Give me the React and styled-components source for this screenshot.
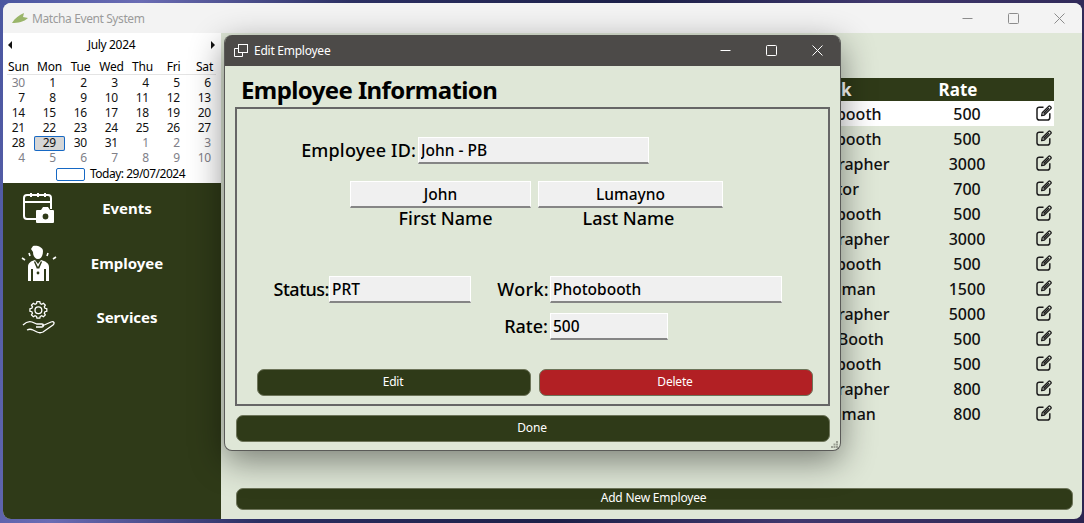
import React from 'react';
import styled, { createGlobalStyle } from 'styled-components';

const FONT = '"Noto Sans", "Open Sans", sans-serif';
const DARK = '#2f3a18';
const PALE = '#dfe7d7';

const GlobalStyle = createGlobalStyle`
  html, body { margin: 0; padding: 0; overflow: hidden; }
  body { font-family: ${FONT}; }
  * { box-sizing: border-box; }
`;

const Desktop = styled.div`
  position: relative;
  width: 1084px;
  height: 523px;
  overflow: hidden;
  padding: 3px 2px 4px 3px;
  background: linear-gradient(100deg, #4a56a0 0%, #6a6cb4 12%, #2b2f62 30%, #1c2048 55%, #40386e 75%, #2a2450 100%);
`;

const MainWindow = styled.div`
  height: 100%;
  display: flex;
  flex-direction: column;
  border-radius: 8px;
  overflow: hidden;
  background: ${PALE};
`;

const TitleBar = styled.div`
  height: ${(p) => (p.$dark ? 31 : 30)}px;
  flex: none;
  display: flex;
  align-items: center;
  padding-left: 8px;
  background: ${(p) => (p.$dark ? '#4c4a48' : '#f3f3f3')};
  color: ${(p) => (p.$dark ? '#ffffff' : '#9b9b9b')};
  font-size: 12px;
  letter-spacing: ${(p) => (p.$dark ? -0.25 : -0.4)}px;
`;

const TitleText = styled.span`
  margin-left: ${(p) => p.$gap}px;
  flex: 1;
`;

const CaptionButton = styled.span`
  width: 46px;
  display: flex;
  justify-content: center;
  color: ${(p) => p.$color};
`;

const WindowBody = styled.div`
  flex: 1;
  display: flex;
  min-height: 0;
`;

const LeftPanel = styled.div`
  width: 218px;
  flex: none;
  display: flex;
  flex-direction: column;
`;

const Calendar = styled.div`
  height: 150px;
  flex: none;
  background: #ffffff;
  color: #1a1a1a;
  font-size: 12px;
  letter-spacing: -0.2px;
`;

const MonthHeader = styled.div`
  height: 27px;
  display: flex;
  align-items: center;
  justify-content: space-between;
  padding: 0 6px 4px 5px;
  color: #000000;
  letter-spacing: -0.35px;
`;

const Arrow = styled.span`
  width: 0;
  height: 0;
  border-top: 4px solid transparent;
  border-bottom: 4px solid transparent;
  ${(p) => (p.$left ? 'border-right: 4px solid #111;' : 'border-left: 4px solid #111;')}
`;

const Grid = styled.div`
  display: grid;
  grid-template-columns: repeat(7, 31px);
`;

const HeaderGrid = styled(Grid)`
  height: 16px;
  line-height: 14px;
  text-align: center;
  color: #000000;
  position: relative;
  &::after {
    content: '';
    position: absolute;
    left: 4px;
    width: 209px;
    bottom: 1px;
    height: 1px;
    background: #e4e4e4;
  }
`;

const Day = styled.span`
  height: 15px;
  line-height: 14px;
  text-align: right;
  padding-right: 9px;
  color: ${(p) => (p.$muted ? '#808088' : '#111111')};
  ${(p) =>
    p.$selected &&
    `background: #d6d6d6;
     box-shadow: inset 0 0 0 1px #1668c4;
     border-radius: 2px;`}
`;

const TodayRow = styled.div`
  display: flex;
  align-items: center;
  gap: 5px;
  padding: 1px 0 0 53px;
  color: #000000;
`;

const TodayBox = styled.span`
  width: 29px;
  height: 13px;
  border: 1px solid #1668c4;
  border-radius: 2px;
`;

const TodayText = styled.span`
  line-height: 14px;
  letter-spacing: -0.5px;
`;

const Sidebar = styled.nav`
  flex: 1;
  background: ${DARK};
  display: flex;
  flex-direction: column;
  gap: 4.5px;
`;

const NavItem = styled.div`
  height: 50px;
  display: grid;
  grid-template-columns: 72px 104px;
  align-items: center;
  justify-items: center;
  color: #ffffff;
  font-size: 15px;
  font-weight: 700;
`;

const Content = styled.main`
  flex: 1;
  display: flex;
  flex-direction: column;
  padding: 45px 9px 9px 15px;
`;

const Table = styled.div`
  width: 818px;
`;

const Row = styled.div`
  display: grid;
  grid-template-columns: 524px 152px 110px 32px;
  height: ${(p) => (p.$head ? 23 : 25)}px;
  align-items: center;
  font-size: ${(p) => (p.$head ? 17 : 16)}px;
  font-weight: ${(p) => (p.$head ? 700 : 500)};
  background: ${(p) => (p.$head ? DARK : p.$active ? '#ffffff' : 'transparent')};
  color: ${(p) => (p.$head ? '#ffffff' : '#111111')};
`;

const Cell = styled.span`
  grid-column: ${(p) => p.$col};
  text-align: center;
  padding-right: ${(p) => p.$shift || 0}px;
`;

const EditIconWrap = styled.span`
  grid-column: 4;
  display: flex;
  padding: 0 0 2px 14px;
`;

const WideButton = styled.button`
  height: ${(p) => p.$h || 27}px;
  width: 100%;
  border: 1px solid #6d7459;
  border-radius: 7px;
  background: ${(p) => (p.$red ? '#b22024' : DARK)};
  color: #ffffff;
  font-family: ${FONT};
  font-size: 12px;
  letter-spacing: -0.2px;
  padding: 0 2px 3px 0;
`;

const AddButton = styled(WideButton)`
  margin-top: auto;
`;

const Dialog = styled.section`
  position: absolute;
  left: 224px;
  top: 35px;
  width: 617px;
  height: 416px;
  display: flex;
  flex-direction: column;
  background: ${PALE};
  border: 1px solid #5a5a58;
  border-top: none;
  border-radius: 8px;
  overflow: hidden;
  box-shadow: 0 10px 34px rgba(0, 0, 0, 0.46);
`;

const DialogBody = styled.div`
  position: relative;
  flex: 1;
  padding: 0 10px;
  display: flex;
  flex-direction: column;
`;

const Heading = styled.h1`
  margin: 0;
  height: 41px;
  padding: 7px 0 0 6px;
  font-size: 24px;
  line-height: 33px;
  font-weight: 700;
  color: #000000;
  letter-spacing: -0.6px;
`;

const Frame = styled.div`
  height: 299px;
  border: 2px solid #666666;
  padding-top: 28px;
  display: flex;
  flex-direction: column;
`;

const IdRow = styled.div`
  display: flex;
  align-items: center;
  gap: 2px;
`;

const Label = styled.label`
  font-size: 18px;
  font-weight: 500;
  color: #000000;
  letter-spacing: ${(p) => p.$track || 0}px;
  line-height: 22px;
  white-space: nowrap;
`;

const RightLabel = styled(Label)`
  text-align: right;
  width: ${(p) => p.$w}px;
  padding-right: ${(p) => p.$pad || 0}px;
  padding-bottom: 2px;
  grid-column: ${(p) => p.$col || 'auto'};
`;

const NameLabel = styled(Label)`
  margin-top: -1px;
  padding-left: ${(p) => p.$left || 0}px;
  padding-right: ${(p) => p.$right || 0}px;
`;

const Field = styled.input`
  width: ${(p) => p.$w}px;
  height: 27px;
  flex: none;
  background: #f0f0f0;
  border: 1px solid #ffffff;
  border-bottom: 2px solid #858585;
  padding: 0 2px;
  font-family: ${FONT};
  font-size: 15.5px;
  font-weight: 500;
  color: #000000;
  text-align: ${(p) => (p.$center ? 'center' : 'left')};
  outline: none;
`;

const NamesRow = styled.div`
  display: flex;
  gap: 7px;
  margin-top: 17px;
  padding-left: 113px;
`;

const NameField = styled.div`
  display: flex;
  flex-direction: column;
  align-items: center;
`;

const DetailsGrid = styled.div`
  display: grid;
  grid-template-columns: 92px 142px 79px 232px;
  grid-auto-rows: 27px;
  row-gap: 10px;
  align-items: center;
  margin-top: 47px;
`;

const ActionRow = styled.div`
  display: flex;
  gap: 8px;
  margin-top: auto;
  padding: 0 15px 8px 20px;
`;

const DoneButton = styled(WideButton)`
  margin: 9px 0 0 1px;
  width: 594px;
`;

const Grip = styled.svg`
  position: absolute;
  right: 2px;
  bottom: 2px;
`;

const Logo = () => (
  <svg width="18" height="12" viewBox="0 0 18 12">
    <path d="M1 11 C4 6 8 3 13 1 L12 5 L17 6 C13 10 7 11 1 11Z" fill="#9ab56a" />
  </svg>
);

const MinIcon = () => (
  <svg width="11" height="11" viewBox="0 0 11 11">
    <path d="M0.5 5.5H10.5" stroke="currentColor" fill="none" />
  </svg>
);

const MaxIcon = () => (
  <svg width="11" height="11" viewBox="0 0 11 11">
    <rect x="0.5" y="0.5" width="10" height="10" rx="1" stroke="currentColor" fill="none" />
  </svg>
);

const CloseIcon = () => (
  <svg width="11" height="11" viewBox="0 0 11 11">
    <path d="M0.5 0.5L10.5 10.5M10.5 0.5L0.5 10.5" stroke="currentColor" fill="none" />
  </svg>
);

const Captions = ({ color }) => (
  <>
    <CaptionButton $color={color}><MinIcon /></CaptionButton>
    <CaptionButton $color={color}><MaxIcon /></CaptionButton>
    <CaptionButton $color={color}><CloseIcon /></CaptionButton>
  </>
);

const EditIcon = () => (
  <svg width="16" height="16" viewBox="0 0 16 16" fill="none" stroke="#1c1c1c">
    <path d="M7.5 2.2H3.2A2.2 2.2 0 0 0 1 4.4v8.4A2.2 2.2 0 0 0 3.2 15h8.4a2.2 2.2 0 0 0 2.2-2.2V8.2" strokeWidth="1.5" />
    <path d="M5.6 10.6l.6-2.8L12.6 1.4c.5-.5 1.1-.5 1.6 0l.6.6c.5.5.5 1.1 0 1.6L8.4 10Z" strokeWidth="1.3" strokeLinejoin="round" />
    <path d="M7 8l1.2 1.2L13.5 3.6l-1-1Z" fill="#1c1c1c" stroke="none" />
  </svg>
);

const EventsIcon = () => (
  <svg width="32" height="31" viewBox="0 0 32 31" fill="none" stroke="#fff" strokeWidth="2">
    <path d="M14 26H4a3 3 0 0 1-3-3V5a3 3 0 0 1 3-3h21a3 3 0 0 1 3 3v11" />
    <path d="M1 9H28" />
    <path d="M8 0V4M15 0V4M22 0V4" />
    <path
      d="M14 17h4l2-3h5l2 3h3a1 1 0 0 1 1 1v11a1 1 0 0 1-1 1H14a1 1 0 0 1-1-1V18a1 1 0 0 1 1-1Z"
      fill="#fff"
      stroke="none"
    />
    <circle cx="22.5" cy="23.5" r="3.6" fill="#2f3a18" stroke="#fff" strokeWidth="1.4" />
  </svg>
);

const EmployeeIcon = () => (
  <svg width="36" height="36" viewBox="0 0 36 36" fill="#fff">
    <path d="M12 1 C16 0 22 2 22 6 C22 11 20 14 17 14 C14 14 12 11 12 7 L10 4Z" />
    <path d="M7 36V22c0-4 3-6 7-7l3 4 3-4c4 1 8 3 8 7v14h-3V24h-2v12H12V24h-2v12Z" />
    <path d="M14 16l3 6 3-6 1 1-3 7h-2l-3-7Z" fill="#2f3a18" />
    <path d="M14 26l3-3 3 3v5h-6Z" />
    <circle cx="17" cy="28" r="1.4" fill="#2f3a18" />
    <path d="M1 13l3 2M8 8l1 3M27 8l-1 3M35 12l-3 2" stroke="#fff" strokeWidth="1.6" fill="none" />
  </svg>
);

const ServicesIcon = () => (
  <svg width="34" height="33" viewBox="0 0 34 33" fill="none" stroke="#fff" strokeWidth="1.3">
    <path
      d="M14.5 1h4l.6 2.6 2 .9 2.4-1.4 2.6 2.6-1.4 2.4.9 2 2.6.6v3.6l-2.6.6-.9 2 1.4 2.4-2.6 2.6-2.4-1.4-2 .9-.6 2.4h-4l-.6-2.4-2-.9-2.4 1.4-2.6-2.6 1.4-2.4-.9-2-2.6-.6v-3.6l2.6-.6.9-2-1.4-2.4 2.6-2.6 2.4 1.4 2-.9Z"
      transform="translate(4.5 0) scale(0.72)"
      strokeWidth="1.8"
    />
    <circle cx="16.4" cy="9.2" r="3.4" />
    <path d="M1 24c3-3 6-4 9-3l5 2h5c2 0 2 3 0 3h-6" />
    <path d="M20 25l9-4c3-1 4 1 2 3l-10 7c-2 1-4 1-6 0l-4-2c-2-1-4-1-6 0" />
  </svg>
);

const weeks = [
  [[30, 1], 1, 2, 3, 4, 5, 6],
  [7, 8, 9, 10, 11, 12, 13],
  [14, 15, 16, 17, 18, 19, 20],
  [21, 22, 23, 24, 25, 26, 27],
  [28, 29, 30, 31, [1, 1], [2, 1], [3, 1]],
  [[4, 1], [5, 1], [6, 1], [7, 1], [8, 1], [9, 1], [10, 1]],
];

const employees = [
  ['Photobooth', 500],
  ['Photobooth', 500],
  ['Photographer', 3000],
  ['Editor', 700],
  ['Photobooth', 500],
  ['Photographer', 3000],
  ['Photobooth', 500],
  ['Photoman', 1500],
  ['Photographer', 5000],
  ['Photo Booth', 500],
  ['Photobooth', 500],
  ['Photographer', 800],
  ['Photoman', 800],
];

const App = () => {
  return (
    <Desktop>
      <GlobalStyle />
      <MainWindow>
        <TitleBar>
          <Logo />
          <TitleText $gap={3}>Matcha Event System</TitleText>
          <Captions color="#8c8c8c" />
        </TitleBar>
        <WindowBody>
          <LeftPanel>
            <Calendar>
              <MonthHeader>
                <Arrow $left />
                <span>July 2024</span>
                <Arrow />
              </MonthHeader>
              <HeaderGrid>
                {['Sun', 'Mon', 'Tue', 'Wed', 'Thu', 'Fri', 'Sat'].map((d) => (
                  <span key={d}>{d}</span>
                ))}
              </HeaderGrid>
              <Grid>
                {weeks.flat().map((d, i) => {
                  const muted = Array.isArray(d);
                  const value = muted ? d[0] : d;
                  return (
                    <Day key={i} $muted={muted} $selected={value === 29 && !muted}>
                      {value}
                    </Day>
                  );
                })}
              </Grid>
              <TodayRow>
                <TodayBox />
                <TodayText>Today: 29/07/2024</TodayText>
              </TodayRow>
            </Calendar>
            <Sidebar>
              <NavItem><EventsIcon /><span>Events</span></NavItem>
              <NavItem><EmployeeIcon /><span>Employee</span></NavItem>
              <NavItem><ServicesIcon /><span>Services</span></NavItem>
            </Sidebar>
          </LeftPanel>
          <Content>
            <Table>
              <Row $head>
                <Cell $col={2} $shift={14}>Work</Cell>
                <Cell $col={3} $shift={18}>Rate</Cell>
              </Row>
              {employees.map(([work, rate], i) => (
                <Row key={i} $active={i === 0}>
                  <Cell $col={2}>{work}</Cell>
                  <Cell $col={3}>{rate}</Cell>
                  <EditIconWrap><EditIcon /></EditIconWrap>
                </Row>
              ))}
            </Table>
            <AddButton $h={22}>Add New Employee</AddButton>
          </Content>
        </WindowBody>
      </MainWindow>

      <Dialog>
        <TitleBar $dark>
          <svg width="16" height="14" viewBox="0 0 16 14" fill="none" stroke="#fff">
            <rect x="5.5" y="0.5" width="9" height="8" />
            <path d="M5.5 4.5H1.5V12.5H9.5V8.5" />
          </svg>
          <TitleText $gap={5}>Edit Employee</TitleText>
          <Captions color="#ffffff" />
        </TitleBar>
        <DialogBody>
          <Heading>Employee Information</Heading>
          <Frame>
            <IdRow>
              <RightLabel $w={179} $track={0.15}>Employee ID:</RightLabel>
              <Field $w={231} readOnly value="John - PB" />
            </IdRow>
            <NamesRow>
              <NameField>
                <Field $w={181} $center readOnly value="John" />
                <NameLabel $left={10}>First Name</NameLabel>
              </NameField>
              <NameField>
                <Field $w={185} $center readOnly value="Lumayno" />
                <NameLabel $right={4}>Last Name</NameLabel>
              </NameField>
            </NamesRow>
            <DetailsGrid>
              <RightLabel $w={92} $track={-0.5}>Status:</RightLabel>
              <Field $w={142} readOnly value="PRT" />
              <RightLabel $w={79} $pad={1} $track={0.3}>Work:</RightLabel>
              <Field $w={232} readOnly value="Photobooth" />
              <RightLabel $w={79} $pad={2} $col={3}>Rate:</RightLabel>
              <Field $w={118} readOnly value="500" />
            </DetailsGrid>
            <ActionRow>
              <WideButton>Edit</WideButton>
              <WideButton $red>Delete</WideButton>
            </ActionRow>
          </Frame>
          <DoneButton>Done</DoneButton>
          <Grip width="7" height="7" viewBox="0 0 7 7" fill="#9a9f92">
            <rect x="5" y="0" width="2" height="2" />
            <rect x="2.5" y="2.5" width="2" height="2" />
            <rect x="5" y="2.5" width="2" height="2" />
            <rect x="0" y="5" width="2" height="2" />
            <rect x="2.5" y="5" width="2" height="2" />
            <rect x="5" y="5" width="2" height="2" />
          </Grip>
        </DialogBody>
      </Dialog>
    </Desktop>
  );
};

export default App;
